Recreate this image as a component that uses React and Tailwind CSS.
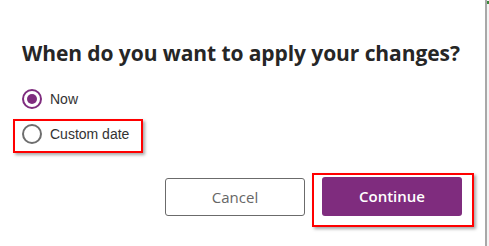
import React from "react";

export default function App() {
  return (
    <div className="relative flex w-[489px] h-[246px] bg-white overflow-hidden">
      <div className="flex-1 flex flex-col pt-[39px] pl-[22px] pr-[23px]">
        <h1
          className="text-[21px] leading-[28px] font-bold tracking-[-0.08px] text-[#262626] whitespace-nowrap"
          style={{ fontFamily: '"Open Sans", sans-serif' }}
        >
          When do you want to apply your changes?
        </h1>
        <div
          className="mt-[22px] flex flex-col gap-[15px] text-[14px] text-[#333333]"
          style={{ fontFamily: '"Liberation Sans", Arial, sans-serif' }}
        >
          <label className="flex items-center h-[20px] gap-[8px]">
            <span className="w-[20px] h-[20px] rounded-full border-2 border-[#7f2c7e] flex items-center justify-center">
              <span className="w-[10px] h-[10px] rounded-full bg-[#7f2c7e]" />
            </span>
            <span>Now</span>
          </label>
          <label className="flex items-center h-[20px] gap-[8px]">
            <span className="w-[20px] h-[20px] rounded-full border-2 border-[#6e6e6e]" />
            <span>Custom date</span>
          </label>
        </div>
        <div
          className="mt-[33px] flex justify-end gap-[17px]"
          style={{ fontFamily: '"Open Sans", sans-serif' }}
        >
          <button className="w-[140px] h-[38px] mt-[1px] rounded-[3px] border border-[#6b6b6b] bg-white text-[15px] text-[#666666]">
            Cancel
          </button>
          <button className="w-[140px] h-[39px] rounded-[3px] bg-[#7f2c7e] text-[15px] font-semibold text-white">
            Continue
          </button>
        </div>
      </div>
      <div className="w-[2px] h-full bg-[#a8a8a8]" />
      <div className="w-[2px] h-full bg-[#f4f4f4] flex flex-col">
        <div className="h-[3px] mt-[1px] bg-[#3c8a3c]" />
      </div>

      <div className="absolute left-[13px] top-[119px] w-[130px] h-[34px] border-2 border-[#ff0000] shadow-[2px_2px_3px_rgba(0,0,0,0.35)] pointer-events-none" />
      <div className="absolute left-[312px] top-[173px] w-[162px] h-[54px] border-2 border-[#ff0000] shadow-[2px_2px_3px_rgba(0,0,0,0.35)] pointer-events-none" />
    </div>
  );
}
